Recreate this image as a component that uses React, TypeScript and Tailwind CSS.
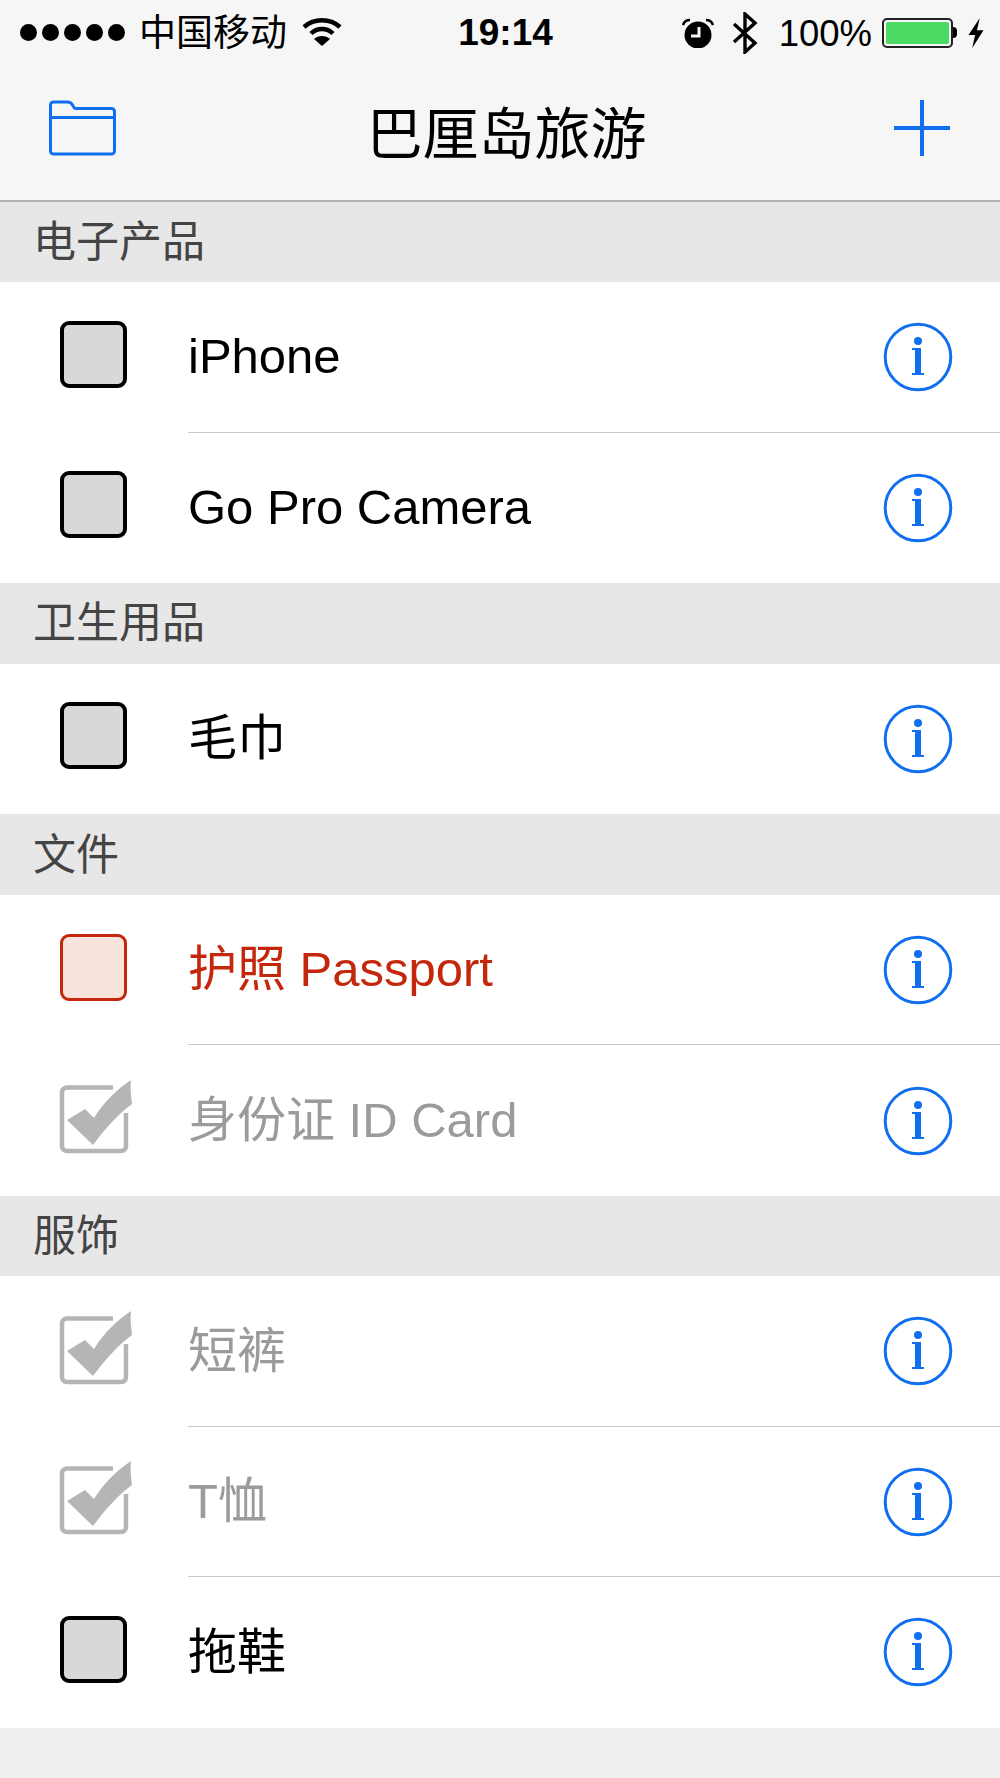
const FONT = "font-['Liberation_Sans','Noto_Sans_CJK_SC',sans-serif]";

type ItemState = "open" | "urgent" | "done";

interface IItem {
    name: string;
    state: ItemState;
}

const sections: { title: string; items: IItem[] }[] = [
    {
        title: "电子产品",
        items: [
            { name: "iPhone", state: "open" },
            { name: "Go Pro Camera", state: "open" },
        ],
    },
    { title: "卫生用品", items: [{ name: "毛巾", state: "open" }] },
    {
        title: "文件",
        items: [
            { name: "护照 Passport", state: "urgent" },
            { name: "身份证 ID Card", state: "done" },
        ],
    },
    {
        title: "服饰",
        items: [
            { name: "短裤", state: "done" },
            { name: "T恤", state: "done" },
            { name: "拖鞋", state: "open" },
        ],
    },
];

const textColor: Record<ItemState, string> = {
    open: "text-black",
    urgent: "text-[#c4270c]",
    done: "text-[#9b9b9b]",
};

const CheckBox = ({ state }: { state: ItemState }) => {
    if (state === "done") {
        return (
            <svg width="76" height="76" viewBox="0 0 76 76" className="-ml-[2px] block">
                <path
                    d="M55 7.500H9a5 5 0 0 0-5 5V66a5 5 0 0 0 5 5h54a5 5 0 0 0 5-5V33"
                    fill="none"
                    stroke="#b5b5b5"
                    strokeWidth="4.500"
                />
                <path
                    d="M9 40 L27 29 L36 38 C45 23 58 10 73 0 C72 8 73 16 74 24 C61 33 47 49 35 65 Z"
                    fill="#b5b5b5"
                />
            </svg>
        );
    }
    const boxColor =
        state === "urgent"
            ? "border-[3px] border-[#c4270c] bg-[#f9e4dd]"
            : "border-[4px] border-black bg-[#d8d8d8]";
    return <div className={`h-[67px] w-[67px] rounded-[9px] ${boxColor}`} />;
};

const InfoIcon = () => (
    <svg width="70" height="70" viewBox="0 0 70 70" className="block">
        <circle cx="35" cy="35" r="32.800" fill="none" stroke="#0f6fef" strokeWidth="3" />
        <circle cx="35" cy="19" r="4" fill="#0f6fef" />
        <path d="M29 26H38V51H41V53H29V51H32V28H29Z" fill="#0f6fef" />
    </svg>
);

const Row = ({ item, last }: { item: IItem; last: boolean }) => (
    <div className="flex h-[150.4px] bg-white">
        <div className="flex w-[188px] shrink-0 items-center pb-[6px] pl-[60px]">
            <CheckBox state={item.state} />
        </div>
        <div
            className={`flex flex-1 items-center justify-between pr-[47px] ${
                last ? "" : "border-b border-[#c8c8c8]"
            }`}
        >
            <span className={`text-[49px] leading-none ${textColor[item.state]}`}>{item.name}</span>
            <InfoIcon />
        </div>
    </div>
);

const StatusBar = () => (
    <div className="grid h-[62px] grid-cols-[1fr_auto_1fr] items-center pl-[20px] pr-[15px] pt-[3px] text-black">
        <div className="flex items-center">
            <div className="flex gap-[5px]">
                <span className="h-[17px] w-[17px] rounded-full bg-black" />
                <span className="h-[17px] w-[17px] rounded-full bg-black" />
                <span className="h-[17px] w-[17px] rounded-full bg-black" />
                <span className="h-[17px] w-[17px] rounded-full bg-black" />
                <span className="h-[17px] w-[17px] rounded-full bg-black" />
            </div>
            <span className="ml-[14px] mt-[1px] text-[37px] leading-none">中国移动</span>
            <svg width="40" height="30" viewBox="0 0 40 30" className="ml-[15px]">
                <path d="M2 9C12 0 28 0 38 9" fill="none" stroke="#000" strokeWidth="4.500" />
                <path d="M9 15.500c6-6 16-6 22 0" fill="none" stroke="#000" strokeWidth="4.500" />
                <path d="M20 28l-8-7c4-4 12-4 16 0z" fill="#000" />
            </svg>
        </div>
        <span className="ml-[6px] text-[37px] font-bold leading-none">19:14</span>
        <div className="flex items-center justify-end">
            <svg width="32" height="30" viewBox="0 0 32 30" className="mr-[18px]">
                <circle cx="16" cy="17" r="13.500" fill="#000" />
                <path d="M17 9v9h-8" fill="none" stroke="#f6f6f6" strokeWidth="3" />
                <path d="M1 7c1-3 3-5 7-5M31 7c-1-3-3-5-7-5" fill="none" stroke="#000" strokeWidth="2.500" />
            </svg>
            <svg width="26" height="42" viewBox="0 0 26 42" className="mr-[21px]">
                <path d="M2 12l21 19-10 9V2l10 9L2 30" fill="none" stroke="#000" strokeWidth="3.400" />
            </svg>
            <span className="mr-[10px] mt-[3px] text-[36.500px] leading-none">100%</span>
            <div className="h-[30px] w-[71px] rounded-[5px] border-2 border-[#222] p-[2px]">
                <div className="h-full w-full rounded-[2px] bg-[#4cd964]" />
            </div>
            <span className="mr-[10px] h-[11px] w-[4px] rounded-r-full bg-black" />
            <svg width="18" height="30" viewBox="0 0 18 32">
                <path d="M13 0L1 18h7L5 32l12-19h-7z" fill="#000" />
            </svg>
        </div>
    </div>
);

export default function App() {
    return (
        <div className={`flex h-[1778px] w-[1000px] flex-col overflow-hidden bg-[#eeeeee] ${FONT}`}>
            <div className="h-[201.5px] border-b-2 border-[#b2b2b2] bg-[#f6f6f6]">
                <StatusBar />
                <div className="flex h-[137px] items-center justify-between pb-[5px] pl-[49px] pr-[50px]">
                    <svg width="67" height="56" viewBox="0 0 67 56" className="block">
                        <path
                            d="M1.500 17V5a3 3 0 0 1 3-3h14c3 0 4 1 5 3l1.500 2.500a2 2 0 0 0 2 1h35.500a3 3 0 0 1 3 3V51a3 3 0 0 1-3 3H4.500a3 3 0 0 1-3-3zM1.500 17.500h64"
                            fill="none"
                            stroke="#0f6fef"
                            strokeWidth="3"
                        />
                    </svg>
                    <span className="ml-[3px] mt-[13px] text-[56px] leading-none text-black">巴厘岛旅游</span>
                    <svg width="56" height="56" viewBox="0 0 56 56" className="block">
                        <path d="M28 0v56M0 28h56" fill="none" stroke="#0f6fef" strokeWidth="4" />
                    </svg>
                </div>
            </div>
            {sections.map((section) => (
                <div key={section.title}>
                    <div className="flex h-[80.750px] items-center bg-[#e7e7e7] pl-[33px] pt-[1px] text-[43px] leading-none text-[#444444]">
                        {section.title}
                    </div>
                    {section.items.map((item, i) => (
                        <Row key={item.name} item={item} last={i === section.items.length - 1} />
                    ))}
                </div>
            ))}
        </div>
    );
}
